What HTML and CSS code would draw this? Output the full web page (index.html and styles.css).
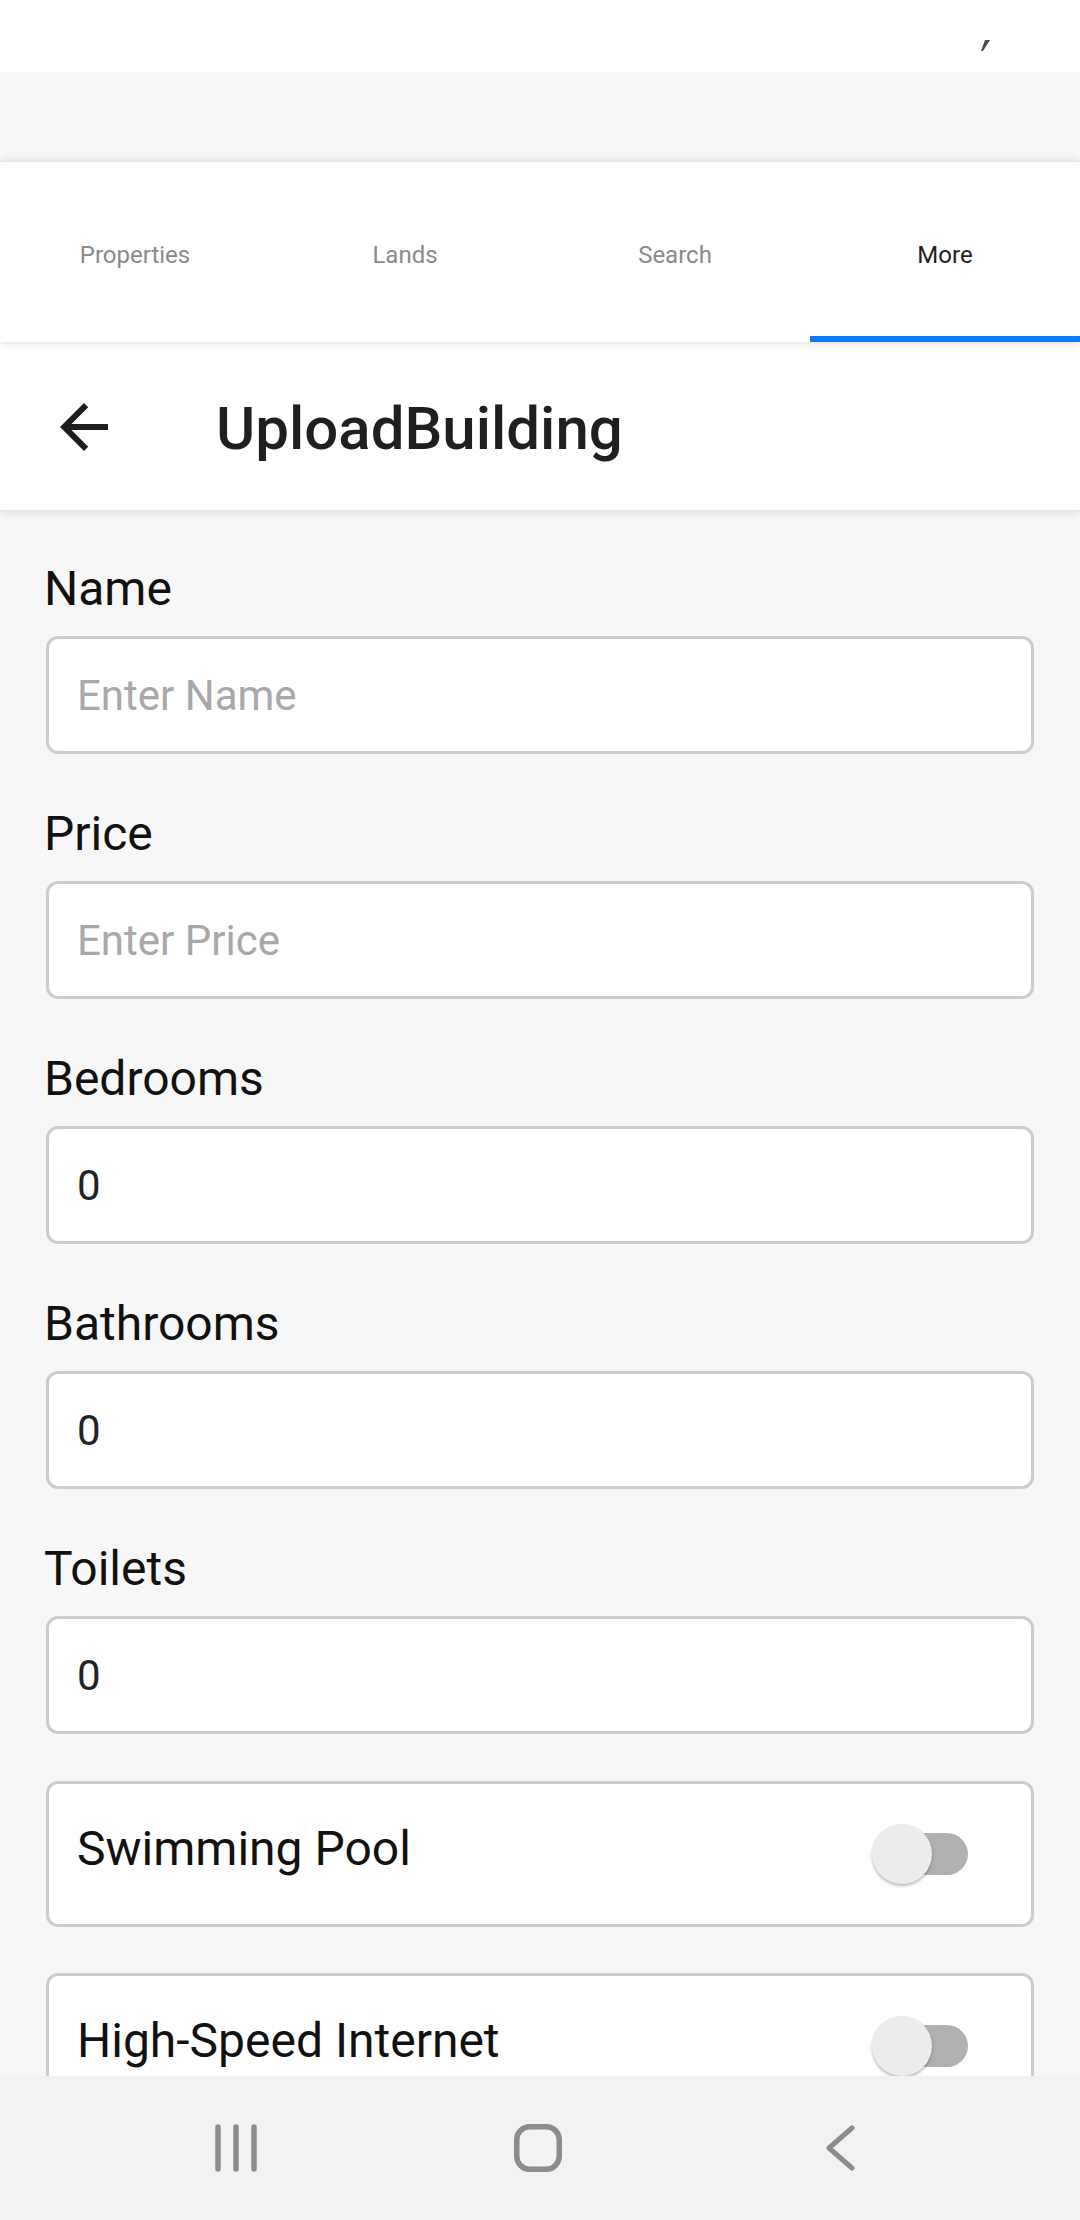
FILE: index.html
```html
<!DOCTYPE html>
<html lang="en">
<head>
<meta charset="utf-8">
<title>UploadBuilding</title>
<link rel="stylesheet" href="styles.css">
</head>
<body>
<div class="screen">
  <div class="status">
    <svg class="status-mark" width="10" height="11" viewBox="0 0 10 11"><polygon points="4,0 9,0 2,11 0,11" fill="#4a4a4a"/></svg>
  </div>
  <div class="band"></div>
  <nav class="tabs">
    <div class="tab">Properties</div>
    <div class="tab">Lands</div>
    <div class="tab">Search</div>
    <div class="tab active">More</div>
  </nav>
  <header class="header">
    <svg class="back" width="72" height="72" viewBox="0 0 24 24"><path d="M20 11H7.83l5.59-5.59L12 4l-8 8 8 8 1.41-1.41L7.83 13H20v-2z" fill="#1c1c1c"/></svg>
    <h1 class="title">UploadBuilding</h1>
  </header>
  <main class="content">
    <div class="fields">
      <div class="field">
        <label class="label">Name</label>
        <div class="input placeholder">Enter Name</div>
      </div>
      <div class="field">
        <label class="label">Price</label>
        <div class="input placeholder">Enter Price</div>
      </div>
      <div class="field">
        <label class="label">Bedrooms</label>
        <div class="input">0</div>
      </div>
      <div class="field">
        <label class="label">Bathrooms</label>
        <div class="input">0</div>
      </div>
      <div class="field">
        <label class="label">Toilets</label>
        <div class="input">0</div>
      </div>
    </div>
    <div class="toggles">
      <div class="toggle-row">
        <span class="toggle-label">Swimming Pool</span>
        <span class="switch"><span class="track"></span><span class="thumb"></span></span>
      </div>
      <div class="toggle-row">
        <span class="toggle-label">High-Speed Internet</span>
        <span class="switch"><span class="track"></span><span class="thumb"></span></span>
      </div>
    </div>
  </main>
  <footer class="navbar">
    <div class="nav-slot">
      <svg width="48" height="48" viewBox="0 0 48 48"><g stroke="#8c8c8c" stroke-width="5.5" stroke-linecap="round"><line x1="6" y1="3" x2="6" y2="45"/><line x1="24" y1="3" x2="24" y2="45"/><line x1="42" y1="3" x2="42" y2="45"/></g></svg>
    </div>
    <div class="nav-slot">
      <svg width="48" height="48" viewBox="0 0 48 48"><rect x="2.75" y="2.75" width="42.5" height="42.5" rx="13" fill="none" stroke="#8c8c8c" stroke-width="5.5"/></svg>
    </div>
    <div class="nav-slot">
      <svg width="30" height="46" viewBox="0 0 30 46"><polyline points="27,3 4,23 27,43" fill="none" stroke="#8c8c8c" stroke-width="5" stroke-linecap="round" stroke-linejoin="round"/></svg>
    </div>
  </footer>
</div>
</body>
</html>
```

FILE: styles.css
```css
* { box-sizing: border-box; }

html, body {
  margin: 0;
  padding: 0;
}

body {
  width: 1080px;
  height: 2220px;
  overflow: hidden;
  font-family: Roboto, "Noto Sans", "Liberation Sans", sans-serif;
  background: #ffffff;
}

.screen {
  display: flex;
  flex-direction: column;
  width: 1080px;
  height: 2220px;
}

.status {
  height: 72px;
  flex: none;
  background: #ffffff;
  display: flex;
  justify-content: flex-end;
  align-items: flex-start;
  padding: 40px 89px 0 0;
}

.band {
  height: 90px;
  flex: none;
  background: #f8f8f8;
}

.tabs {
  height: 180px;
  flex: none;
  background: #ffffff;
  display: grid;
  grid-template-columns: repeat(4, 1fr);
  position: relative;
  z-index: 3;
  box-shadow: 0 -3px 8px rgba(0, 0, 0, 0.08), 0 3px 8px rgba(0, 0, 0, 0.09);
}

.tab {
  display: flex;
  align-items: center;
  justify-content: center;
  padding-top: 6px;
  font-size: 24px;
  color: #8a8a8a;
}

.tab.active {
  color: #1f1f1f;
  box-shadow: inset 0 -6px 0 #0a7aff;
}

.header {
  height: 168px;
  flex: none;
  background: #ffffff;
  display: flex;
  align-items: center;
  padding-left: 48px;
  position: relative;
  z-index: 2;
  box-shadow: 0 3px 8px rgba(0, 0, 0, 0.1);
}

.back {
  flex: none;
  margin-top: 2px;
}

.title {
  margin: 4px 0 0 96px;
  font-size: 60px;
  font-weight: 500;
  color: #1f1f1f;
}

.content {
  flex: 1;
  overflow: hidden;
  background: #f7f7f7;
  padding: 52px 46px 0 46px;
}

.fields {
  display: flex;
  flex-direction: column;
  gap: 53px;
}

.field {
  display: flex;
  flex-direction: column;
  gap: 20px;
}

.label {
  font-size: 48px;
  line-height: 54px;
  color: #111111;
  margin-left: -2px;
}

.input {
  height: 118px;
  background: #ffffff;
  border: 3px solid #cccccc;
  border-radius: 12px;
  padding-left: 28px;
  display: flex;
  align-items: center;
  font-size: 42px;
  color: #222222;
}

.input.placeholder {
  color: #a8a8a8;
}

.toggles {
  margin-top: 47px;
  display: flex;
  flex-direction: column;
  gap: 46px;
}

.toggle-row {
  height: 146px;
  flex: none;
  background: #ffffff;
  border: 3px solid #cccccc;
  border-radius: 12px;
  display: flex;
  align-items: center;
  justify-content: space-between;
  padding: 0 63px 0 28px;
}

.toggle-label {
  font-size: 48px;
  color: #111111;
  margin-top: -11px;
}

.switch {
  position: relative;
  width: 96px;
  height: 60px;
  flex: none;
}

.track {
  position: absolute;
  left: 6px;
  right: 0;
  top: 9px;
  height: 42px;
  border-radius: 21px;
  background: #b0b0b0;
}

.thumb {
  position: absolute;
  left: 0;
  top: 0;
  width: 60px;
  height: 60px;
  border-radius: 50%;
  background: #ececec;
  box-shadow: 0 2px 3px rgba(0, 0, 0, 0.28);
}

.navbar {
  height: 144px;
  flex: none;
  background: #f2f2f2;
  display: flex;
  align-items: center;
  padding-left: 85px;
}

.nav-slot {
  width: 302px;
  display: flex;
  justify-content: center;
  align-items: center;
}
```
